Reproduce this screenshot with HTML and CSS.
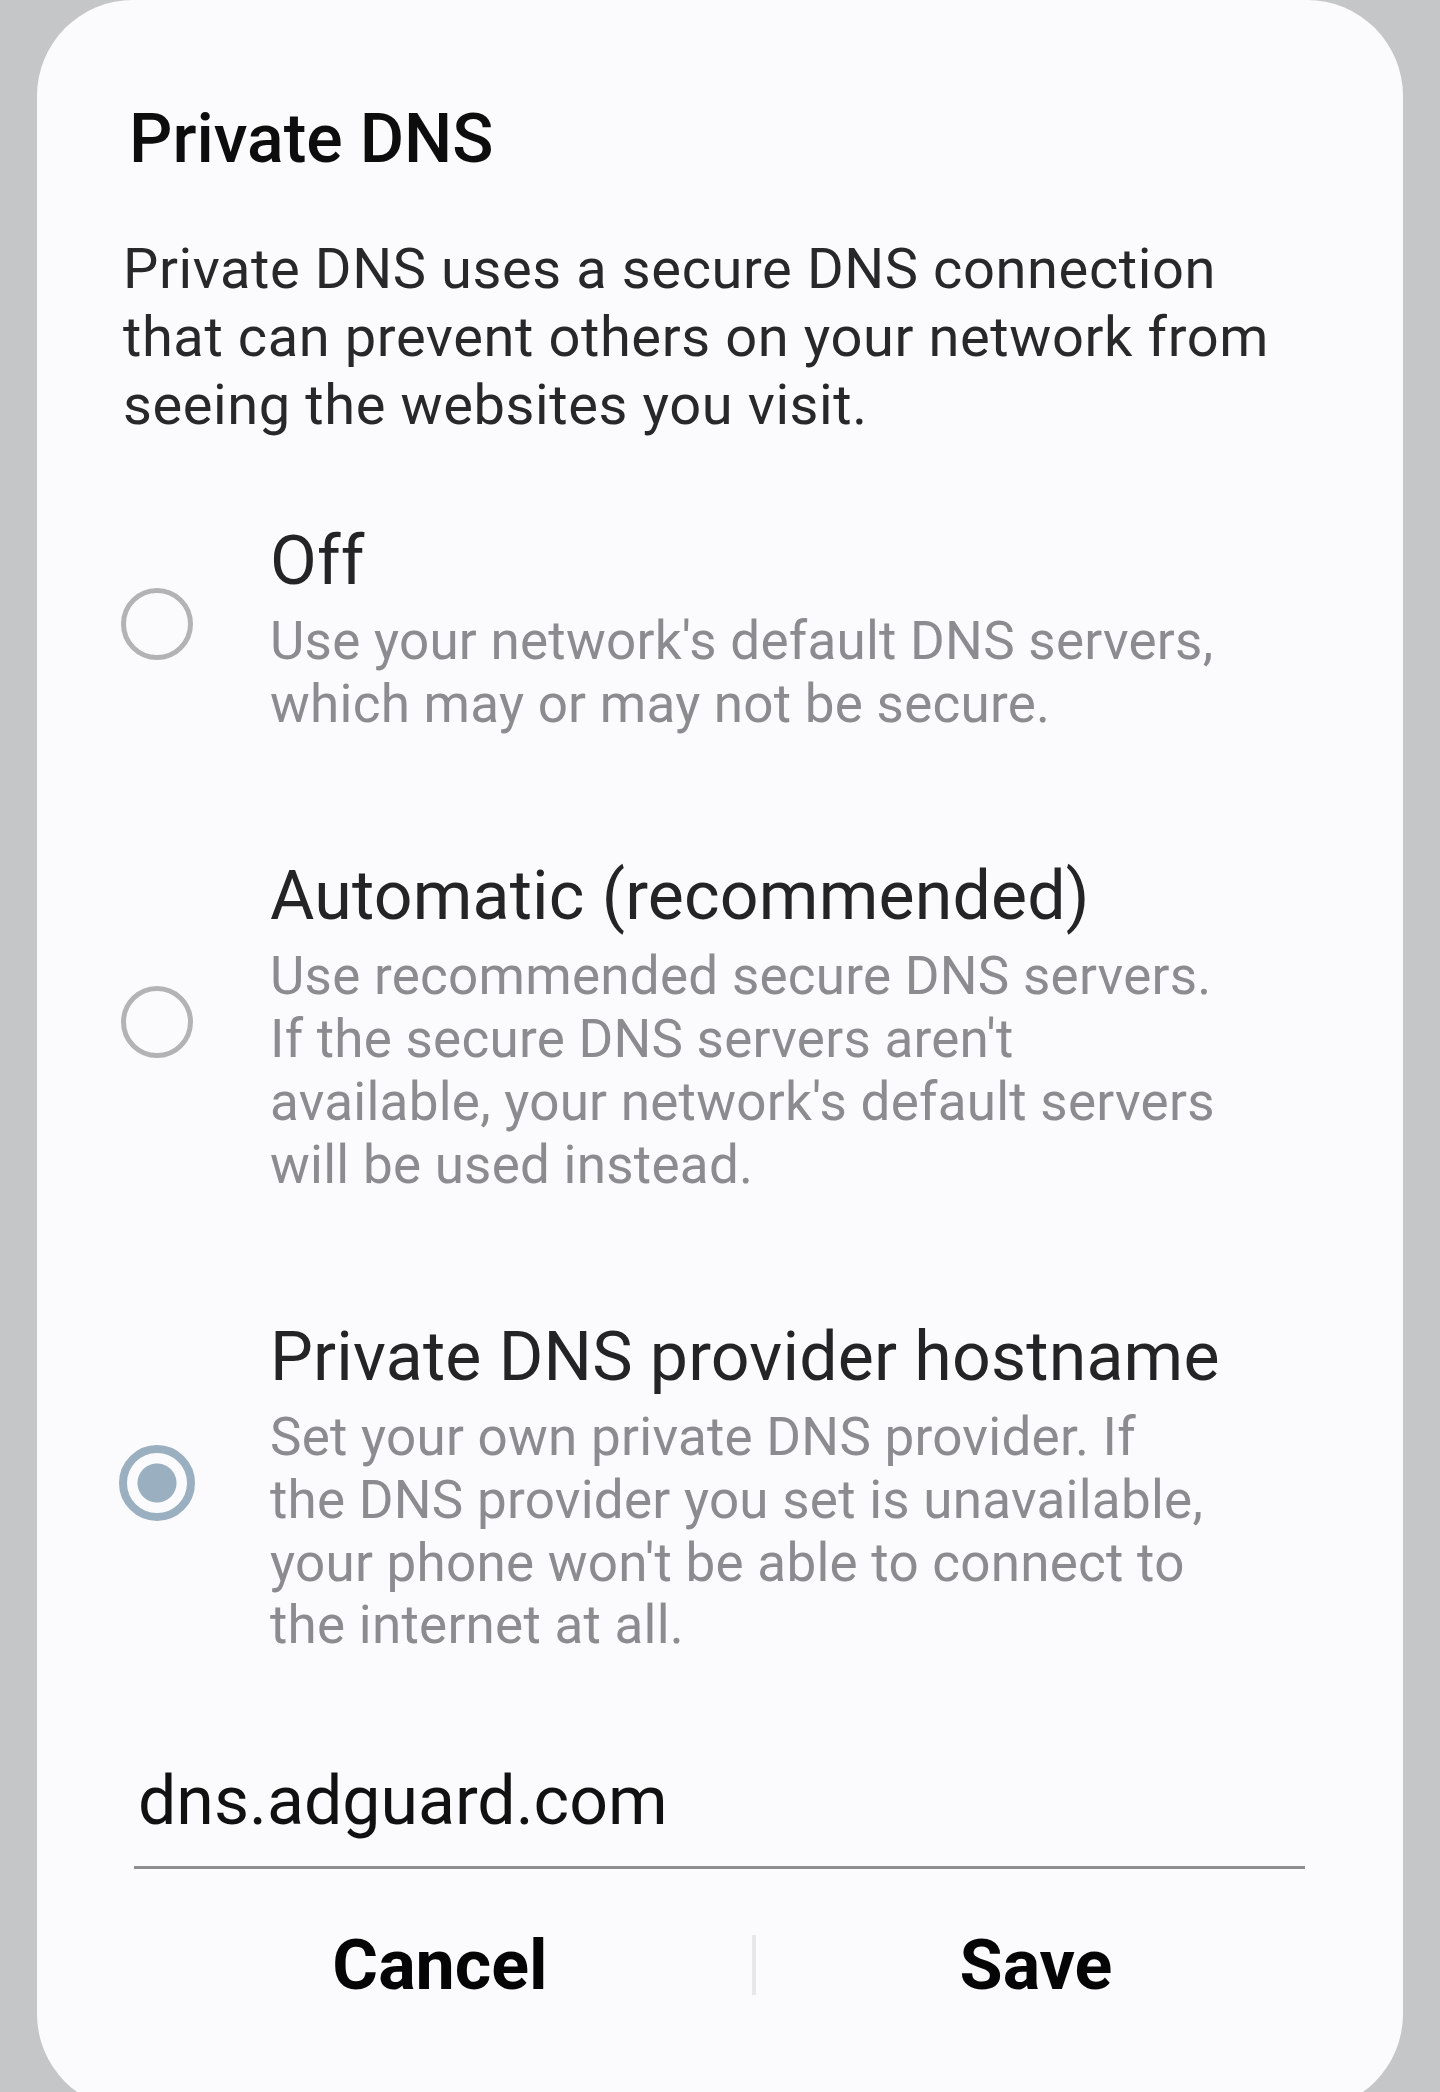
FILE: index.html
```html
<!DOCTYPE html>
<html lang="en">
<head>
<meta charset="utf-8">
<title>Private DNS</title>
<link rel="stylesheet" href="styles.css">
</head>
<body>
<div class="dialog">
  <h1 class="title">Private DNS</h1>
  <p class="intro">Private DNS uses a secure DNS connection<br>that can prevent others on your network from<br>seeing the websites you visit.</p>

  <div class="options">
    <div class="option">
      <span class="radio"></span>
      <div class="option-text">
        <div class="option-title">Off</div>
        <div class="option-summary">Use your network's default DNS servers,<br>which may or may not be secure.</div>
      </div>
    </div>
    <div class="option">
      <span class="radio"></span>
      <div class="option-text">
        <div class="option-title">Automatic (recommended)</div>
        <div class="option-summary">Use recommended secure DNS servers.<br>If the secure DNS servers aren't<br>available, your network's default servers<br>will be used instead.</div>
      </div>
    </div>
    <div class="option">
      <span class="radio radio-on"></span>
      <div class="option-text">
        <div class="option-title">Private DNS provider hostname</div>
        <div class="option-summary">Set your own private DNS provider. If<br>the DNS provider you set is unavailable,<br>your phone won't be able to connect to<br>the internet at all.</div>
      </div>
    </div>
  </div>

  <div class="field">dns.adguard.com</div>

  <div class="actions">
    <div class="btn btn-cancel">Cancel</div>
    <span class="sep"></span>
    <div class="btn btn-save">Save</div>
  </div>
</div>
</body>
</html>
```

FILE: styles.css
```css
html, body {
  margin: 0;
  padding: 0;
}
body {
  background: #c5c6c8;
  height: 2092px;
  overflow: hidden;
  font-family: Roboto, "Noto Sans", sans-serif;
}
.dialog {
  margin-left: 37px;
  width: 1366px;
  height: 2110px;
  box-sizing: border-box;
  background: #fbfbfd;
  border-radius: 96px;
  padding: 99px 98px 0 86px;
}
.title {
  margin: 0 0 56px 6px;
  font-size: 68px;
  line-height: 80px;
  font-weight: 500;
  color: #0d0d0d;
}
.intro {
  margin: 0;
  font-size: 56px;
  line-height: 68px;
  letter-spacing: 0.6px;
  font-weight: 400;
  color: #28282a;
  white-space: nowrap;
}
.options {
  display: flex;
  flex-direction: column;
  gap: 123px;
  margin-top: 84px;
}
.option {
  display: flex;
  align-items: center;
}
.radio {
  flex: none;
  width: 72px;
  height: 72px;
  box-sizing: border-box;
  border: 5px solid #b3b3b5;
  border-radius: 50%;
  margin: 0 77px 10px -2px;
}
.radio-on {
  width: 76px;
  height: 76px;
  margin-left: -4px;
  margin-right: 75px;
  border: 8px solid #9aafc0;
  background: radial-gradient(circle, #9aafc0 0 19px, transparent 20px);
}
.option-text {
  flex: 1;
}
.option-title {
  font-size: 68px;
  line-height: 76px;
  letter-spacing: 0.2px;
  color: #242426;
  margin-bottom: 11px;
}
.option-summary {
  font-size: 53px;
  line-height: 62.7px;
  letter-spacing: 0.25px;
  color: #8c8c90;
  white-space: nowrap;
}
.field {
  margin: 104px 0 0 11px;
  padding: 0 0 25px 4px;
  border-bottom: 3px solid #8e8e90;
  font-size: 68px;
  line-height: 80px;
  color: #111;
}
.actions {
  display: grid;
  grid-template-columns: 624px 4px 560px;
  align-items: center;
  margin: 54px 0 0 5px;
}
.btn {
  text-align: center;
  font-size: 70px;
  line-height: 84px;
  font-weight: 700;
  color: #050505;
}
.sep {
  width: 4px;
  height: 60px;
  background: #e7e7e9;
}
```
